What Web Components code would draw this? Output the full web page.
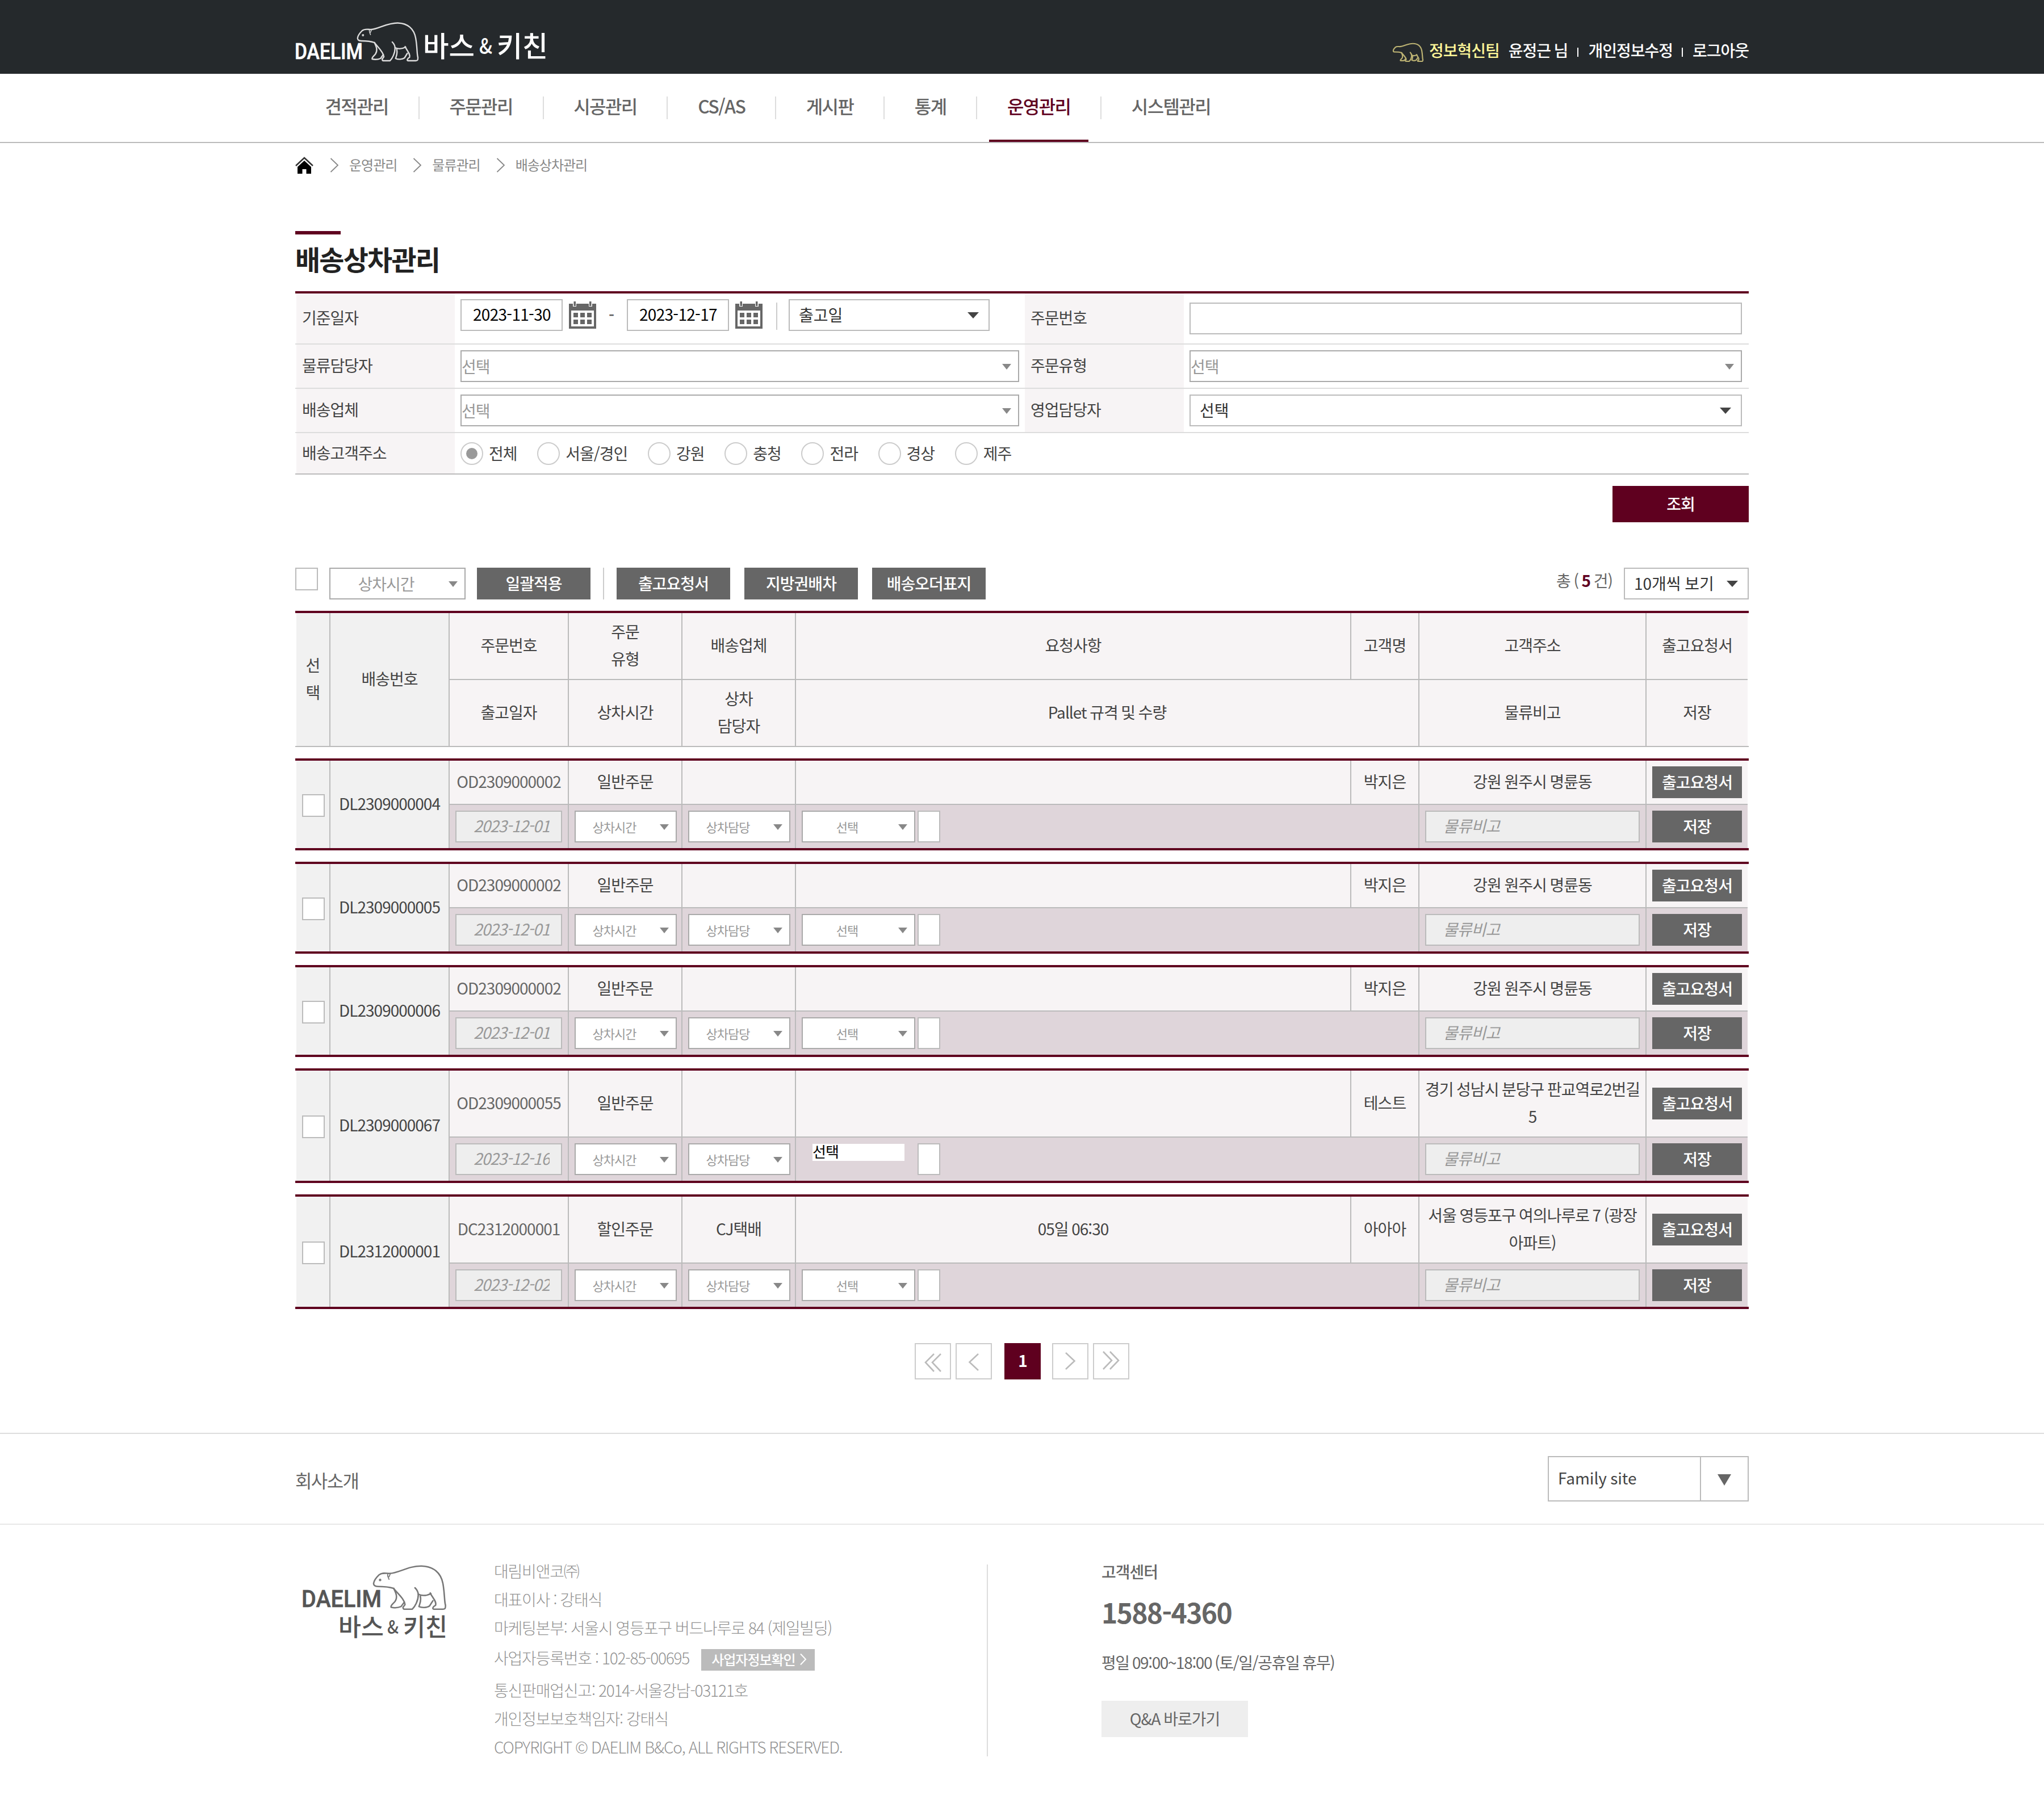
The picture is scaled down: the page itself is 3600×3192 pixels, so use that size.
<!DOCTYPE html>
<html lang="ko">
<head>
<meta charset="utf-8">
<title>배송상차관리</title>
<style>
html,body{margin:0;background:#fff}
body{font:400 28px/47.6px "Noto Sans CJK KR","Noto Sans KR",sans-serif;letter-spacing:-1px;word-spacing:-1.2px;color:#444;width:3600px;height:3192px;overflow:hidden}
</style>
</head>
<body>
<dl-page></dl-page>
<script>
const define = (name, css, html) => customElements.define(name, class extends HTMLElement {
  constructor() {
    super();
    this.attachShadow({mode: 'open'});
  }
  connectedCallback() {
    const body = typeof html === 'function' ? html(this) : html;
    this.shadowRoot.innerHTML = `<style>:host{display:block;box-sizing:border-box}*{box-sizing:border-box}${css}</style>${body}`;
  }
});

/* ---------- brand ---------- */
define('bear-mark', `:host{display:block}svg{display:block;width:100%;height:100%;overflow:visible}`, el => `
<svg viewBox="0 0 112 70" preserveAspectRatio="none" fill="none" stroke="currentColor" stroke-width="${el.getAttribute('stroke') || 2.4}" stroke-linejoin="round" stroke-linecap="round">
<path d="M32 36C24 33 14 33 8 33C3 33 1 30 2 27C3 22 7 18 10 15C15 11 20 13 26 13C40 12 55 1 74 1.500C92 2 103 12 106 28C109 44 108 56 110 62C110 66 110 68 106 68H92C90 67 91 64 95 62C97 56 90 50 87 43"/>
<path d="M32 36C38 44 48 52 49 61L46 65C46 67 47 68 48 68H60C64 64 69 55 69 46C69 42 67 38 64 35"/>
<path d="M32 36C36 44 38 50 34 56C31 60 27 62 28 65C32 66 38 66 43 64L48 57"/>
<path d="M69 45C75 48 82 47 88 44M72 48C74 55 71 60 70 64C74 66 82 66 86 63L91 55"/>
${el.hasAttribute('face') ? '<path d="M23 13C22 17 24 19 25 22M27 13L25 18" stroke-width="1.500"/><circle cx="11.500" cy="23" r=".8"/>' : ''}
</svg>`);

define('brand-wide', `:host{width:444px;height:72px;color:#fff}.r{display:flex;align-items:flex-end;height:72px}svg{display:block;overflow:visible}bear-mark{width:110px;height:70px;margin:0 10px 1px -12px;color:#ddd}`, `
<div class="r"><svg width="120" height="72"><text x="-1" y="66" font-family="Roboto,sans-serif" font-weight="500" font-size="38" letter-spacing="0" textLength="120" lengthAdjust="spacingAndGlyphs" fill="currentColor" stroke="currentColor" stroke-width=".6">DAELIM</text></svg>
<bear-mark face></bear-mark>
<svg width="216" height="72" fill="currentColor" font-family="Noto Sans CJK KR,sans-serif" font-weight="500"><text x="-3" y="62" font-size="50" letter-spacing="0" textLength="91" lengthAdjust="spacingAndGlyphs">바스</text><text x="96" y="57" font-size="38" letter-spacing="0" textLength="23" lengthAdjust="spacingAndGlyphs">&amp;</text><text x="127" y="62" font-size="50" letter-spacing="0" textLength="90" lengthAdjust="spacingAndGlyphs">키친</text></svg></div>`);

define('brand-tall', `:host{width:254px;height:132px;color:#555}.r{display:flex;align-items:flex-end;height:80px}svg{display:block;overflow:visible}bear-mark{width:131px;height:80px;margin-left:-16px;color:#777}.b{margin:7px 0 0 64px}`, `
<div class="r"><svg width="138" height="80"><text x="-3" y="74" font-family="Roboto,sans-serif" font-weight="500" font-size="43" letter-spacing="0" textLength="141" lengthAdjust="spacingAndGlyphs" fill="currentColor" stroke="currentColor" stroke-width=".6">DAELIM</text></svg><bear-mark face stroke="2.2"></bear-mark></div>
<svg class="b" width="190" height="44" fill="currentColor" font-family="Noto Sans CJK KR,sans-serif" font-weight="500"><text x="-2" y="38" font-size="43" letter-spacing="0" textLength="80" lengthAdjust="spacingAndGlyphs">바스</text><text x="84" y="34" font-size="33" letter-spacing="0" textLength="20" lengthAdjust="spacingAndGlyphs">&amp;</text><text x="112" y="38" font-size="43" letter-spacing="0" textLength="78" lengthAdjust="spacingAndGlyphs">키친</text></svg>`);

/* ---------- header ---------- */
define('top-bar', `:host{height:130px;background:#25292c;color:#fff;font-weight:500}
.in{width:2560px;margin:0 auto;display:flex;justify-content:space-between;padding-top:38px}
.u{display:flex;align-items:center;height:48px;margin-top:27px}
bear-mark{width:54px;height:33px;color:#bdb373;margin:6px 10px 0 0}
.t{color:#fff799;margin-right:16px}
i{width:2px;height:16px;background:#fff;margin:5px 17px 0 17px}i+span+i{margin-left:16px}`, `
<div class="in"><brand-wide></brand-wide><div class="u"><bear-mark stroke="4.5"></bear-mark><span class="t">정보혁신팀</span><span>윤정근 님</span><i></i><span>개인정보수정</span><i></i><span>로그아웃</span></div></div>`);

define('main-nav', `:host{height:122px;border-bottom:2px solid #bbb;font-size:32px;font-weight:500;letter-spacing:-1.6px;color:#666}
.in{width:2560px;margin:0 auto;display:flex;align-items:flex-start;height:120px}
.i{display:flex;justify-content:center;height:120px;border-bottom:4px solid transparent;line-height:113px;padding:0 32px;margin:0 20.75px}
.i:first-child{margin-left:20.5px}
.on{color:#5f001f;border-color:#5f001f}
s{width:2px;height:40px;background:#ddd;margin-top:40px}`, () => {
  const n = ['견적관리','주문관리','시공관리','CS/AS','게시판','통계','운영관리','시스템관리'];
  return `<div class="in">${n.map((t, k) => `<span class="i${k === 6 ? ' on' : ''}">${t}</span>`).join('<s></s>')}</div>`;
});

define('crumb-trail', `:host{width:2560px;margin:0 auto;height:155px;padding-top:19px;font-size:24px;color:#888;line-height:38px}
.r{display:flex;align-items:center;height:40px}
.h{margin-right:29px}svg{display:block}.c{margin-right:18px}span{margin:0 28px 2px 0}`, `
<div class="r"><svg class="h" width="32" height="30" viewBox="0 0 32 30"><path d="M1 16L16 2L31 16" fill="none" stroke="#333" stroke-width="2.500"/><path d="M4 18L16 7L28 18V30H19.500V22H12.500V30H4Z" fill="#000"/></svg>
${['운영관리','물류관리','배송상차관리'].map(t => `<svg class="c" width="16" height="26" viewBox="0 0 16 26"><path d="M1.500 1L14 13L1.500 25" fill="none" stroke="#888" stroke-width="1.800"/></svg><span>${t}</span>`).join('')}</div>`);

define('page-title', `:host{width:2560px;margin:0 auto;height:106px;font-size:48px;font-weight:700;letter-spacing:-1.8px;color:#222;line-height:70px}
:host::before{content:"";display:block;width:80px;height:6px;background:#5f001f}div{padding-top:7px}`, `<div><slot></slot></div>`);

/* ---------- controls ---------- */
define('ui-select', `:host{display:flex;align-items:center;height:56px;border:2px solid #bbb;background:#fff;letter-spacing:0;color:#333;padding:0 17px 0 16px}
span{flex:1}svg{display:block;flex:none}
:host([soft]){border-color:#aaa;color:#999;letter-spacing:-1px;padding:2px 12px 0 0}
:host([mid]) span{text-align:center;margin-right:12px}
:host([small]){font-size:22px}`, el => `<span><slot></slot></span>` + (el.hasAttribute('soft')
  ? `<svg width="16" height="10"><path d="M0 0H16L8 10Z" fill="#888"/></svg>`
  : `<svg width="20" height="11"><path d="M0 0H20L10 11Z" fill="#444"/></svg>`));

define('ui-input', `:host{display:flex;align-items:center;height:56px;border:2px solid #bbb;background:#fff;color:#000;letter-spacing:-.7px;padding:0 10px 2px 20px;white-space:nowrap}
div{overflow:hidden;flex:1}
:host([off]){background:#eee;color:#999;font-style:italic;padding:0 20px 2px 30px;letter-spacing:-1px}`, `<div><slot></slot></div>`);

define('ui-button', `:host{display:flex;align-items:center;justify-content:center;height:56px;background:#666;color:#fff;font-weight:500;white-space:nowrap}`, `<slot></slot>`);
define('ui-check', `:host{width:40px;height:40px;border:2px solid #bbb;background:#fff;flex:none}`, ``);
define('ui-radio', `:host{display:flex;align-items:center;margin-right:35.7px;white-space:nowrap}
i{width:40px;height:40px;border:2px solid #ccc;border-radius:50%;margin-right:10px;display:grid;place-items:center}
:host([on]) i::after{content:"";width:20px;height:20px;border-radius:50%;background:#999}`, `<i></i><slot></slot>`);
define('ui-calendar', `:host{width:48px;height:48px}svg{display:block}`, `
<svg width="48" height="48" viewBox="0 0 48 48"><path d="M0 4H48V48H0Z" fill="#666"/><path d="M4 16H44V44H4Z" fill="#fff"/>
<path d="M7 0H13V9H7ZM35 0H41V9H35Z" fill="#fff"/><path d="M8.500 0H12V8H8.500ZM36 0H39.500V8H36Z" fill="#666"/>
<path d="M8 20H16V28H8ZM20 20H28V28H20ZM32 20H40V28H32ZM8 32H16V40H8ZM20 32H28V40H20ZM32 32H40V40H32Z" fill="#666"/></svg>`);

/* ---------- search form ---------- */
define('search-form', `:host{width:2560px;margin:0 auto;border-top:4px solid #5f001f;border-bottom:2px solid #bbb}
.r{display:grid;grid-template-columns:279px 1004px 280px 983px;padding:0 12px 0 2px;border-bottom:2px solid #ddd;height:78px}
.r:last-child{border:0;height:71px}.a{height:90px}
.l{background:#f7f4f5;display:flex;align-items:center;padding:0 0 2px 10px}
.c{display:flex;align-items:center;padding-left:10px}.c>ui-select,.c>ui-input{flex:1}
.a .d{align-items:flex-start;padding-top:10px}
.d>ui-input{flex:none;width:180px}.d>ui-calendar{margin:4px 0 0 11px}
.d>ui-select{flex:none;width:354px}
.d b{width:54px;text-align:center;line-height:54px;color:#555;font-weight:500;padding-right:1px}
.d s{width:2px;height:48px;background:#ccc;margin:6px 20px 0 24px}
.w{margin-right:10px}`, `
<div class="r a"><div class="l">기준일자</div><div class="c d"><ui-input>2023-11-30</ui-input><ui-calendar></ui-calendar><b>-</b><ui-input>2023-12-17</ui-input><ui-calendar></ui-calendar><s></s><ui-select>출고일</ui-select></div><div class="l">주문번호</div><div class="c"><ui-input></ui-input></div></div>
<div class="r"><div class="l">물류담당자</div><div class="c"><ui-select soft class="w">선택</ui-select></div><div class="l">주문유형</div><div class="c"><ui-select soft>선택</ui-select></div></div>
<div class="r"><div class="l">배송업체</div><div class="c"><ui-select soft class="w">선택</ui-select></div><div class="l">영업담당자</div><div class="c"><ui-select>선택</ui-select></div></div>
<div class="r"><div class="l">배송고객주소</div><div class="c"><ui-radio on>전체</ui-radio><ui-radio>서울/경인</ui-radio><ui-radio>강원</ui-radio><ui-radio>충청</ui-radio><ui-radio>전라</ui-radio><ui-radio>경상</ui-radio><ui-radio>제주</ui-radio></div></div>`);

define('search-action', `:host{width:2560px;margin:0 auto;height:164px;padding-top:20px;display:flex;justify-content:flex-end}
ui-button{width:240px;height:64px;background:#5f001f;padding-bottom:1px}`, `<ui-button>조회</ui-button>`);

define('list-toolbar', `:host{width:2560px;margin:0 auto;height:76px;display:flex;align-items:flex-start}
.s{width:240px;margin:0 20px}.b{width:200px}.g{margin-left:25px}
i{width:2px;height:56px;background:#ccc;margin:0 22px}
.n{margin:0 20px 0 auto;color:#666;line-height:44px}.n b{color:#5f001f;font-weight:700}
.p{width:220px}`, `
<ui-check></ui-check><ui-select soft mid class="s">상차시간</ui-select><ui-button class="b">일괄적용</ui-button><i></i><ui-button class="b">출고요청서</ui-button><ui-button class="b g">지방권배차</ui-button><ui-button class="b g">배송오더표지</ui-button>
<div class="n">총 ( <b>5</b> 건)</div><ui-select class="p">10개씩 보기</ui-select>`);

/* ---------- shipment list ---------- */
const grid = `:host{width:2560px;margin:0 auto 20px;border:solid #5f001f;border-width:4px 0}
.g{display:grid;grid-template-columns:58px 208px 208px 198px 198px 976px 118px 398px 178px;gap:2px;background:#bbb;border:solid #fff;border-width:0 2px;text-align:center;white-space:nowrap}
.g>*{background:#f7f4f5;display:flex;align-items:center;justify-content:center;padding:0 10px 2px}
.g>.f{background:#f1f1f1;grid-row:span 2}.x{grid-column:span 2}`;

define('list-head', grid + `:host{border-bottom:2px solid #bbb}.g{grid-template-rows:116px 116px}`, `<div class="g">
<div class="f">선<br>택</div><div class="f">배송번호</div><div>주문번호</div><div>주문<br>유형</div><div>배송업체</div><div>요청사항</div><div>고객명</div><div>고객주소</div><div>출고요청서</div>
<div>출고일자</div><div>상차시간</div><div>상차<br>담당자</div><div class="x">Pallet 규격 및 수량</div><div>물류비고</div><div>저장</div></div>`);

define('ship-row', grid + `.g{grid-template-rows:76px 76px}:host([tall]) .g{grid-template-rows:116px 76px}
.g>.e{background:#dfd5da;padding-bottom:0}.g>.t{padding-bottom:0}.e>*{flex:1}.e>.v{flex:none;width:180px;margin-right:-2px}.o{color:#666}.g>.k{padding:4px 0 0 2px}
.g>.x{justify-content:flex-start}.x>.s{flex:none;width:200px;margin-right:4px}.x>.q{flex:none;width:40px;padding:0}
.z{width:162px;height:30px;background:#fff;color:#000;font-size:26px;line-height:26px;text-align:left;margin:-24px 23px 0 19px}
.x>.z{flex:none}
.e ui-input{text-align:left}ui-button{flex:1}`, el => {
  const a = n => el.getAttribute(n) || '';
  return `<div class="g"><div class="f k"><ui-check></ui-check></div><div class="f">${a('no')}</div><div class="o">${a('order')}</div><div>${a('kind')}</div><div>${a('carrier')}</div><div>${a('memo')}</div><div>${a('name')}</div><div>${a('addr').replace('|', '<br>')}</div><div class="t"><ui-button>출고요청서</ui-button></div>
<div class="e"><ui-input off>${a('date')}</ui-input></div><div class="e"><ui-select soft mid small class="v">상차시간</ui-select></div><div class="e"><ui-select soft mid small class="v">상차담당</ui-select></div>
<div class="e x">${el.hasAttribute('plain') ? '<div class="z">선택</div>' : '<ui-select soft mid small class="s">선택</ui-select>'}<ui-input class="q"></ui-input></div>
<div class="e"><ui-input off>물류비고</ui-input></div><div class="e"><ui-button>저장</ui-button></div></div>`;
});

define('page-nav', `:host{width:378px;margin:0 auto;display:flex;padding-top:40px;height:198px}
.b{width:64px;height:64px;border:2px solid #ccc;margin-right:8px}.b:last-child{margin:0}
svg{display:block;overflow:visible}.on{width:64px;height:64px;background:#5f001f;color:#fff;font-weight:700;line-height:60px;text-align:center;margin:0 20px 0 14px}
path{fill:none;stroke:#bbb;stroke-width:2.600}`, `
<div class="b"><svg width="60" height="60"><path d="M32 17L17 32L32 48M44 17L29 32L44 48"/></svg></div>
<div class="b"><svg width="60" height="60"><path d="M38 17L22.500 31.500L38 46"/></svg></div>
<div class="on">1</div>
<div class="b"><svg width="60" height="60"><path d="M22 15L37.500 29.500L22 44"/></svg></div>
<div class="b"><svg width="60" height="60"><path d="M16 13L31 28.500L16 44M28 13L43 28.500L28 44"/></svg></div>`);

/* ---------- footer ---------- */
define('site-footer', `:host{border-top:2px solid #ddd}
.t{width:2560px;margin:0 auto;height:158px;display:flex;align-items:center;justify-content:space-between;color:#666;font-size:32px;letter-spacing:-1.6px}
.t span{padding-top:5px}
.fs{width:354px;height:80px;border:2px solid #bbb;display:flex;font-size:28px;letter-spacing:0;color:#444;line-height:74px}
.fs b{flex:1;font-weight:400;padding-left:16px;letter-spacing:-.1px;line-height:73px}.fs i{width:84px;border-left:2px solid #bbb;display:grid;place-items:center;padding-top:4px}
.m{border-top:2px solid #e8e8e8}
.c{width:2560px;margin:0 auto;display:flex;padding-top:70px}
brand-tall{margin:1px 82px 0 14px}
.l{width:870px;height:338px;border-right:2px solid #ddd;color:#939393;font-weight:300;letter-spacing:-1.2px;word-spacing:-.5px;white-space:nowrap}
.l p{margin:0;height:50px;line-height:50px;margin-top:-14px;margin-bottom:14px}
.l .k{height:60px;display:flex;align-items:center;line-height:60px}.k span{padding-bottom:4px}
.k em{display:flex;align-items:center;justify-content:space-between;width:200px;height:38px;background:#bbb;color:#fff;font:500 24px/36px "Noto Sans CJK KR",sans-serif;letter-spacing:-1px;padding:0 13px 2px 18px;margin:4px 0 0 21px}
.r{padding-left:200px;color:#666}.r p{margin:0;line-height:48px}
.r .h{font-weight:500;margin-top:-12px}.r .n{font-size:48px;font-weight:700;letter-spacing:-1.7px;line-height:70px;margin-top:12px}
.r .w{margin-top:30px;letter-spacing:-1.4px}.r .q{width:258px;height:64px;background:#eee;line-height:62px;text-align:center;margin-top:44px}`, `
<div class="t"><span>회사소개</span><div class="fs"><b>Family site</b><i><svg width="24" height="20"><path d="M0 0H24L12 20Z" fill="#666"/></svg></i></div></div>
<div class="m"><div class="c"><brand-tall></brand-tall>
<div class="l"><p>대림비앤코㈜</p><p>대표이사 : 강태식</p><p>마케팅본부: 서울시 영등포구 버드나루로 84 (제일빌딩)</p><p class="k"><span>사업자등록번호 : 102-85-00695</span><em>사업자정보확인<svg width="14" height="22"><path d="M2 1.500L11 11L2 20.500" fill="none" stroke="#fff" stroke-width="2"/></svg></em></p><p>통신판매업신고: 2014-서울강남-03121호</p><p>개인정보보호책임자: 강태식</p><p>COPYRIGHT © DAELIM B&amp;Co, ALL RIGHTS RESERVED.</p></div>
<div class="r"><p class="h">고객센터</p><p class="n">1588-4360</p><p class="w">평일 09:00~18:00 (토/일/공휴일 휴무)</p><p class="q">Q&amp;A 바로가기</p></div></div></div>`);

define('dl-page', ``, `
<top-bar></top-bar><main-nav></main-nav><crumb-trail></crumb-trail>
<page-title>배송상차관리</page-title>
<search-form></search-form><search-action></search-action>
<list-toolbar></list-toolbar><list-head></list-head>
<ship-row no="DL2309000004" order="OD2309000002" kind="일반주문" name="박지은" addr="강원 원주시 명륜동" date="2023-12-01"></ship-row>
<ship-row no="DL2309000005" order="OD2309000002" kind="일반주문" name="박지은" addr="강원 원주시 명륜동" date="2023-12-01"></ship-row>
<ship-row no="DL2309000006" order="OD2309000002" kind="일반주문" name="박지은" addr="강원 원주시 명륜동" date="2023-12-01"></ship-row>
<ship-row tall plain no="DL2309000067" order="OD2309000055" kind="일반주문" name="테스트" addr="경기 성남시 분당구 판교역로2번길|5" date="2023-12-16"></ship-row>
<ship-row tall no="DL2312000001" order="DC2312000001" kind="할인주문" carrier="CJ택배" memo="05일 06:30" name="아아아" addr="서울 영등포구 여의나루로 7 (광장|아파트)" date="2023-12-02"></ship-row>
<page-nav></page-nav><site-footer></site-footer>`);
</script>
</body>
</html>
